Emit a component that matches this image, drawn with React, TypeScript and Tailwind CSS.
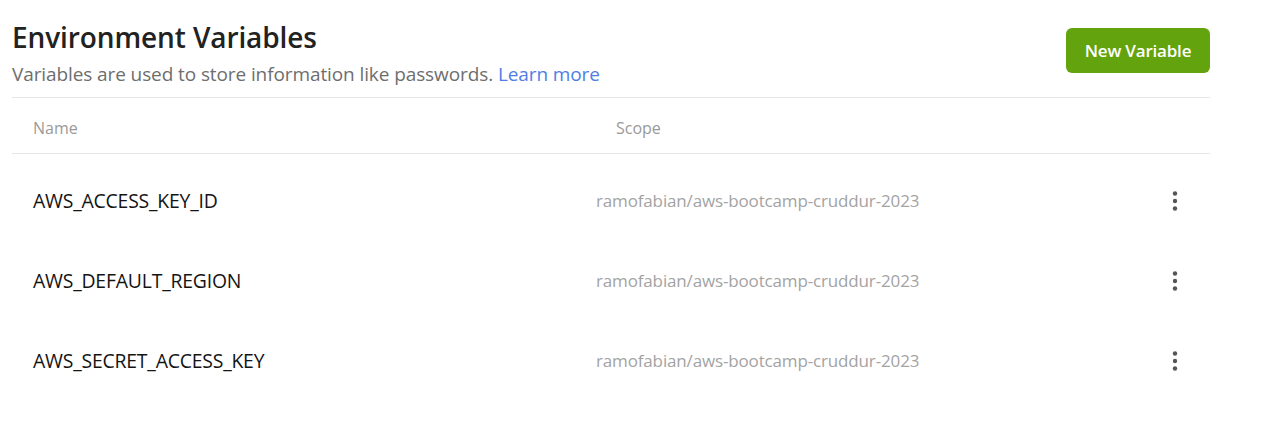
const rows = [
    "AWS_ACCESS_KEY_ID",
    "AWS_DEFAULT_REGION",
    "AWS_SECRET_ACCESS_KEY",
];

const scope = "ramofabian/aws-bootcamp-cruddur-2023";

const MoreIcon = () => (
    <svg width="6" height="20" viewBox="0 0 6 20" fill="#555555">
        <circle cx="3" cy="2.5" r="2.2" />
        <circle cx="3" cy="10" r="2.2" />
        <circle cx="3" cy="17.5" r="2.2" />
    </svg>
);

export default function App() {
    return (
        <div className="bg-white w-[1276px] h-[425px] font-['Open_Sans',sans-serif]">
            <div className="w-[1198px] ml-3">

                {/* Encabezado */}
                <div className="flex justify-between items-start h-[98px] border-b border-[#e6e6e6]">
                    <div className="pt-[18px]">
                        <h1 className="text-[28px] leading-[38px] font-semibold text-[#222222] tracking-[-0.1px]">
                            Environment Variables
                        </h1>
                        <p className="text-[19px] leading-6 mt-[6px] text-[#6e6e6e] tracking-[-0.1px]">
                            Variables are used to store information like passwords.{" "}
                            <a className="text-[#4f7ee6]">Learn more</a>
                        </p>
                    </div>
                    <button className="mt-7 w-[144px] h-[45px] rounded-md bg-[#63a30d] text-white text-[17px] font-semibold tracking-[-0.2px]">
                        New Variable
                    </button>
                </div>

                {/* Cabecera de tabla */}
                <div className="flex items-center h-14 pt-1 border-b border-[#e6e6e6] text-[16px] text-[#9a9a9a]">
                    <span className="ml-[21px] w-[583px]">Name</span>
                    <span>Scope</span>
                </div>

                {/* Filas */}
                <div className="mt-[7px]">
                    {rows.map((name) => (
                        <div key={name} className="flex items-center h-20">
                            <span className="ml-[21px] w-[563px] text-[19.4px] text-[#141414] tracking-[-0.2px]">
                                {name}
                            </span>
                            <span className="flex-1 text-[17px] text-[#a3a3a3] tracking-[-0.15px]">
                                {scope}
                            </span>
                            <span className="mr-[32px] flex">
                                <MoreIcon />
                            </span>
                        </div>
                    ))}
                </div>

            </div>
        </div>
    );
}
